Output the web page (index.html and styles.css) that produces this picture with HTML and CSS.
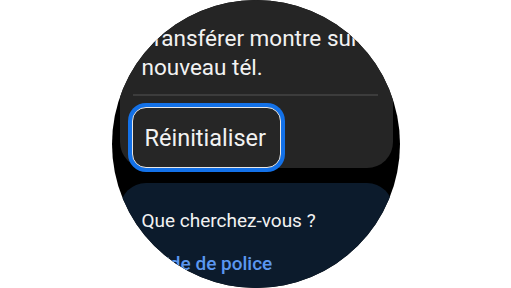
FILE: index.html
```html
<!DOCTYPE html>
<html lang="fr">
<head>
<meta charset="utf-8">
<link rel="stylesheet" href="styles.css">
</head>
<body>
<div class="stage">
  <div class="watch">
    <div class="screen">
      <section class="card card-settings">
        <p class="desc">Transférer montre sur nouveau tél.</p>
        <hr class="divider">
        <button class="btn-reset">Réinitialiser</button>
      </section>
      <section class="card card-help">
        <p class="question">Que cherchez-vous ?</p>
        <a class="link">Guide de police</a>
      </section>
    </div>
  </div>
</div>
</body>
</html>
```

FILE: styles.css
```css
html, body {
  margin: 0;
  padding: 0;
  background: #ffffff;
}
.stage {
  width: 511px;
  height: 288px;
  display: flex;
  justify-content: center;
  overflow: hidden;
}
.watch {
  width: 288px;
  height: 288px;
  border-radius: 50%;
  background: #000000;
  overflow: hidden;
  flex: none;
  font-family: Roboto, "Noto Sans", sans-serif;
}
.screen {
  display: flex;
  flex-direction: column;
  gap: 15px;
  padding: 0 7px 0 8px;
  margin-top: -30px;
}
.card {
  border-radius: 26px;
}
.card-settings {
  background: #252525;
  padding: 54px 15px 0 13px;
}
.desc {
  margin: 0;
  padding-left: 9px;
  color: #f2f2f2;
  font-size: 22.5px;
  line-height: 29px;
  width: 260px;
}
.divider {
  margin: 12px 0 0 0;
  border: 0;
  height: 2px;
  background: #3c3c3c;
}
.btn-reset {
  align-self: flex-start;
  margin: 11px 0 0 -1px;
  width: 149px;
  height: 61px;
  box-sizing: border-box;
  padding: 0 0 0 12px;
  text-align: left;
  background: #262626;
  border: 1px solid #e8e8e8;
  border-radius: 14px;
  box-shadow: 0 0 0 4px #1371e8;
  color: #f2f2f2;
  font-family: Roboto, "Noto Sans", sans-serif;
  font-size: 23.5px;
  display: block;
}
.card-help {
  background: #0c1b2c;
  padding: 26px 22px 40px 22px;
  display: flex;
  flex-direction: column;
}
.question {
  margin: 0;
  color: #f2f2f2;
  font-size: 19px;
  line-height: 24px;
}
.link {
  margin-top: 19px;
  color: #5b97f0;
  font-size: 19px;
  line-height: 24px;
  font-weight: 500;
}
```
